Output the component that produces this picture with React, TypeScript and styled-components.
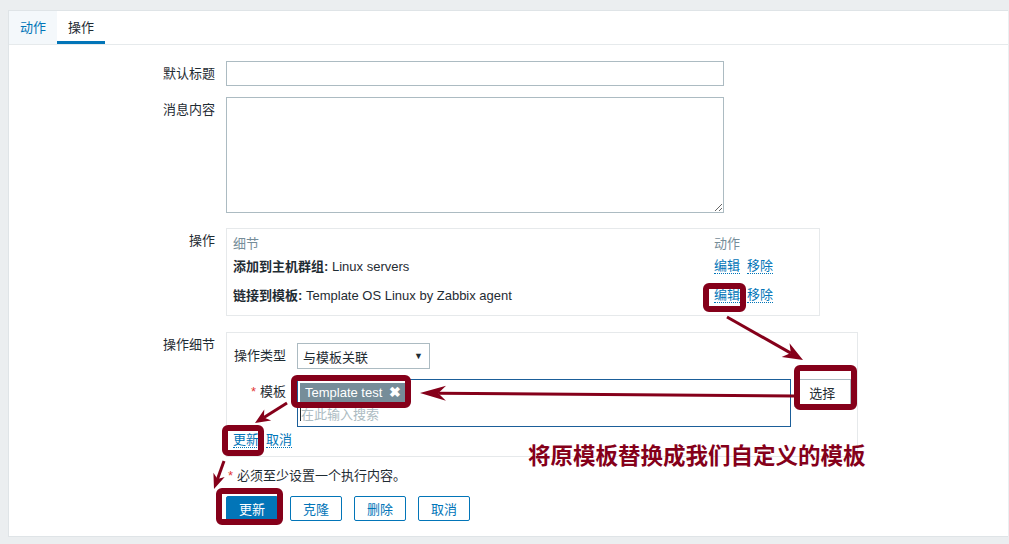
import React from 'react';
import styled, { createGlobalStyle } from 'styled-components';

const GlobalStyle = createGlobalStyle`
  html, body {
    margin: 0;
    padding: 0;
    background: #ebeef0;
  }
  body {
    font-family: "Liberation Sans", "Noto Sans CJK SC", sans-serif;
    font-size: 13px;
    color: #1f2c33;
  }
`;

const Page = styled.div`
  position: relative;
  width: 1009px;
  height: 544px;
  padding: 10px 1px 0 8px;
  box-sizing: border-box;
  overflow: hidden;
`;

const Panel = styled.div`
  height: 527px;
  background: #fff;
  border: 1px solid #dfe4e7;
  border-right: none;
  box-sizing: border-box;
`;

const TabBar = styled.div`
  display: flex;
  border-bottom: 1px solid #e6eaec;
`;

const Tab = styled.div<{ $active?: boolean }>`
  padding: 3px 11px 0;
  line-height: 27px;
  border-bottom: 3px solid ${(p) => (p.$active ? '#0275b8' : 'transparent')};
  background: ${(p) => (p.$active ? '#fff' : '#f4f8fb')};
  color: ${(p) => (p.$active ? '#1f2c33' : '#0275b8')};
`;

const Form = styled.div`
  padding-top: 16px;
`;

const Row = styled.div<{ $mb?: number }>`
  display: flex;
  align-items: flex-start;
  margin-bottom: ${(p) => p.$mb ?? 0}px;
`;

const Label = styled.div`
  width: 217px;
  flex: none;
  box-sizing: border-box;
  padding: 4px 11px 0 0;
  line-height: 17px;
  text-align: right;
  white-space: nowrap;
`;

const TextInput = styled.div`
  width: 498px;
  height: 25px;
  border: 1px solid #acbbc2;
  box-sizing: border-box;
`;

const TextArea = styled.textarea`
  width: 498px;
  height: 116px;
  border: 1px solid #acbbc2;
  box-sizing: border-box;
  margin: 0;
  padding: 0;
  outline: none;
`;

const OpsTable = styled.div`
  width: 594px;
  border: 1px solid #e6e9eb;
  box-sizing: border-box;
  padding: 4px 0 6px 6px;
`;

const OpsRow = styled.div<{ $head?: boolean }>`
  display: flex;
  align-items: center;
  height: ${(p) => (p.$head ? 18 : 29)}px;
  color: ${(p) => (p.$head ? '#768d99' : '#1f2c33')};
`;

const OpsDetail = styled.div`
  flex: 1;
  white-space: nowrap;
`;

const OpsAction = styled.div`
  width: 105px;
  flex: none;
  display: flex;
  gap: 7px;
`;

const Bold = styled.b`
  font-weight: bold;
`;

const Link = styled.span`
  color: #0275b8;
  line-height: 15px;
  display: inline-block;
  border-bottom: 1px dotted #0275b8;
`;

const DetailsBox = styled.div`
  width: 632px;
  border: 1px solid #e6e9eb;
  box-sizing: border-box;
  padding: 10px 6px 8px 6px;
`;

const SubRow = styled.div<{ $mb?: number }>`
  display: flex;
  align-items: flex-start;
  margin-bottom: ${(p) => p.$mb ?? 0}px;
`;

const SubLabel = styled.div`
  width: 64px;
  flex: none;
  box-sizing: border-box;
  padding: 4px 11px 0 0;
  line-height: 17px;
  text-align: right;
  white-space: nowrap;
`;

const Star = styled.span`
  color: #e33734;
  margin-right: 4px;
`;

const Select = styled.div`
  width: 133px;
  height: 26px;
  border: 1px solid #acbbc2;
  box-sizing: border-box;
  padding: 0 6px 0 5px;
  display: flex;
  align-items: center;
  justify-content: space-between;
`;

const Caret = styled.span`
  font-size: 9px;
  color: #1f2c33;
`;

const MultiSelect = styled.div`
  width: 498px;
  height: 48px;
  border: 1px solid #1b5e99;
  box-sizing: border-box;
  padding: 3px 0 0 2px;
`;

const TagChip = styled.div`
  display: inline-flex;
  align-items: center;
  height: 19px;
  padding: 0 4px 0 5px;
  background: #768d99;
  color: #fff;
  line-height: 19px;
`;

const TagClose = styled.span`
  margin-left: 7px;
  font-size: 14px;
  font-weight: bold;
`;

const SearchLine = styled.div`
  display: flex;
  align-items: center;
  margin-top: 2px;
  height: 18px;
  color: #acbbc2;
`;

const TextCaret = styled.span`
  width: 1px;
  height: 15px;
  background: #1f2c33;
`;

const SideButton = styled.div`
  margin-left: 3px;
  width: 58px;
  height: 28px;
  border: 1px solid #acbbc2;
  box-sizing: border-box;
  display: flex;
  align-items: center;
  justify-content: center;
  padding-bottom: 1px;
`;

const LinkRow = styled.div`
  display: flex;
  gap: 7px;
  margin-top: 5px;
`;

const Note = styled.div`
  line-height: 16px;
  padding-left: 2px;
`;

const ButtonRow = styled.div`
  display: flex;
  gap: 12px;
`;

const Button = styled.div<{ $primary?: boolean }>`
  width: 52px;
  height: 25px;
  box-sizing: border-box;
  border: 1px solid #0275b8;
  border-radius: 2px;
  background: ${(p) => (p.$primary ? '#0275b8' : '#fff')};
  color: ${(p) => (p.$primary ? '#fff' : '#0275b8')};
  display: flex;
  align-items: center;
  justify-content: center;
`;

const Overlay = styled.svg`
  position: absolute;
  left: 0;
  top: 0;
  pointer-events: none;
`;

const Callout = styled.div`
  position: absolute;
  left: 528px;
  top: 443px;
  font-family: "Noto Sans CJK SC", sans-serif;
  font-weight: bold;
  font-size: 22.5px;
  line-height: 1;
  color: #85001a;
  white-space: nowrap;
`;

const MAROON = '#85001a';

const frames = [
  [703, 283, 746, 312],
  [794, 365, 857, 410],
  [291, 375, 411, 408],
  [222, 425, 264, 456],
  [216, 488, 283, 525],
];

const arrows = [
  { x1: 727, y1: 317, x2: 803, y2: 360, w: 3, len: 20, head: 16 },
  { x1: 795, y1: 396, x2: 420, y2: 393, w: 3, len: 26, head: 15 },
  { x1: 287, y1: 403, x2: 255, y2: 423, w: 3, len: 15, head: 13 },
  { x1: 224, y1: 461, x2: 214, y2: 489, w: 3, len: 15, head: 12 },
];

const Arrow = ({ x1, y1, x2, y2, w, len, head }: (typeof arrows)[number]) => {
  const dx = x2 - x1;
  const dy = y2 - y1;
  const d = Math.hypot(dx, dy);
  const ux = dx / d;
  const uy = dy / d;
  const px = -uy;
  const py = ux;
  const bx = x2 - ux * len;
  const by = y2 - uy * len;
  const nx = x2 - ux * len * 0.7;
  const ny = y2 - uy * len * 0.7;
  const pts = [
    [x2, y2],
    [bx + (px * head) / 2, by + (py * head) / 2],
    [nx, ny],
    [bx - (px * head) / 2, by - (py * head) / 2],
  ]
    .map((p) => p.join(','))
    .join(' ');
  return (
    <g>
      <line x1={x1} y1={y1} x2={nx} y2={ny} stroke={MAROON} strokeWidth={w} />
      <polygon points={pts} fill={MAROON} />
    </g>
  );
};

const Annotations = () => (
  <>
    <Overlay width={1009} height={544}>
      {frames.map(([a, b, c, d], i) => (
        <rect
          key={i}
          x={a + 3}
          y={b + 3}
          width={c - a - 6}
          height={d - b - 6}
          rx={3}
          fill="none"
          stroke={MAROON}
          strokeWidth={6}
        />
      ))}
      {arrows.map((a, i) => (
        <Arrow key={i} {...a} />
      ))}
    </Overlay>
    <Callout>将原模板替换成我们自定义的模板</Callout>
  </>
);

export default function App() {
  return (
    <>
      <GlobalStyle />
      <Page>
        <Panel>
          <TabBar>
            <Tab>动作</Tab>
            <Tab $active>操作</Tab>
          </TabBar>
          <Form>
            <Row $mb={11}>
              <Label>默认标题</Label>
              <TextInput />
            </Row>
            <Row $mb={15}>
              <Label>消息内容</Label>
              <TextArea />
            </Row>
            <Row $mb={16}>
              <Label>操作</Label>
              <OpsTable>
                <OpsRow $head>
                  <OpsDetail>细节</OpsDetail>
                  <OpsAction>动作</OpsAction>
                </OpsRow>
                <OpsRow>
                  <OpsDetail>
                    <Bold>添加到主机群组:</Bold> Linux servers
                  </OpsDetail>
                  <OpsAction>
                    <Link>编辑</Link>
                    <Link>移除</Link>
                  </OpsAction>
                </OpsRow>
                <OpsRow>
                  <OpsDetail>
                    <Bold>链接到模板:</Bold> Template OS Linux by Zabbix agent
                  </OpsDetail>
                  <OpsAction>
                    <Link>编辑</Link>
                    <Link>移除</Link>
                  </OpsAction>
                </OpsRow>
              </OpsTable>
            </Row>
            <Row $mb={11}>
              <Label>操作细节</Label>
              <DetailsBox>
                <SubRow $mb={10}>
                  <SubLabel>操作类型</SubLabel>
                  <Select>
                    <span>与模板关联</span>
                    <Caret>▼</Caret>
                  </Select>
                </SubRow>
                <SubRow>
                  <SubLabel>
                    <Star>*</Star>模板
                  </SubLabel>
                  <MultiSelect>
                    <TagChip>
                      Template test<TagClose>✖</TagClose>
                    </TagChip>
                    <SearchLine>
                      <TextCaret />
                      在此输入搜索
                    </SearchLine>
                  </MultiSelect>
                  <SideButton>选择</SideButton>
                </SubRow>
                <LinkRow>
                  <Link>更新</Link>
                  <Link>取消</Link>
                </LinkRow>
              </DetailsBox>
            </Row>
            <Row $mb={12}>
              <Label />
              <Note>
                <Star>*</Star>必须至少设置一个执行内容。
              </Note>
            </Row>
            <Row>
              <Label />
              <ButtonRow>
                <Button $primary>更新</Button>
                <Button>克隆</Button>
                <Button>删除</Button>
                <Button>取消</Button>
              </ButtonRow>
            </Row>
          </Form>
        </Panel>
        <Annotations />
      </Page>
    </>
  );
}
